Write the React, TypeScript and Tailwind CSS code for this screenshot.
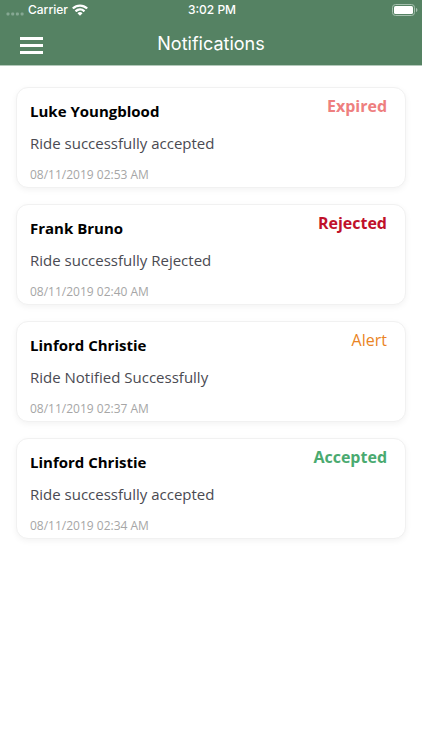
type Notification = {
  id: number;
  name: string;
  message: string;
  date: string;
  status: string;
  statusClass: string;
};

const notifications: Notification[] = [
  {
    id: 1,
    name: "Luke Youngblood",
    message: "Ride successfully accepted",
    date: "08/11/2019 02:53 AM",
    status: "Expired",
    statusClass: "font-bold text-[#ee7f7f]",
  },
  {
    id: 2,
    name: "Frank Bruno",
    message: "Ride successfully Rejected",
    date: "08/11/2019 02:40 AM",
    status: "Rejected",
    statusClass: "font-bold text-[#c0102a]",
  },
  {
    id: 3,
    name: "Linford Christie",
    message: "Ride Notified Successfully",
    date: "08/11/2019 02:37 AM",
    status: "Alert",
    statusClass: "font-normal text-[#ea8424]",
  },
  {
    id: 4,
    name: "Linford Christie",
    message: "Ride successfully accepted",
    date: "08/11/2019 02:34 AM",
    status: "Accepted",
    statusClass: "font-bold text-[#4aaa70]",
  },
];

function StatusBar() {
  return (
    <div className="grid h-5 grid-cols-3 items-center pl-[6px] pr-1 leading-5">
      <div className="flex items-center gap-1 text-xs">
        <svg width="18" height="4" viewBox="0 0 18 4" className="mt-2" aria-hidden="true">
          <g fill="#86a893">
            <rect x="0.5" y="0.5" width="3" height="3" rx="1" />
            <rect x="5.2" y="0.5" width="3" height="3" rx="1" />
            <rect x="9.9" y="0.5" width="3" height="3" rx="1" />
            <rect x="14.6" y="0.5" width="3" height="3" rx="1" />
          </g>
        </svg>
        <span className="font-medium">Carrier</span>
        <svg width="16" height="12" viewBox="0 0 16 12" fill="#fff" aria-label="Wi-Fi">
          <path d="M8 .4C5 .4 2.300 1.500.3 3.400a.4.4 0 0 0 0 .6l1.100 1.100c.2.2.4.2.6 0A8.800 8.800 0 0 1 8 2.700c2.300 0 4.400.9 6 2.400.2.200.4.200.6 0l1.100-1.100a.4.4 0 0 0 0-.6C13.700 1.500 11 .4 8 .4z" />
          <path d="M8 4.200c-1.900 0-3.700.7-5 2a.4.4 0 0 0 0 .6l1.100 1.100c.2.200.4.200.6 0A4.900 4.900 0 0 1 8 6.500c1.300 0 2.400.5 3.300 1.400.2.200.4.200.6 0L13 6.800a.4.4 0 0 0 0-.6 7.200 7.200 0 0 0-5-2z" />
          <path d="M8 8c-.9 0-1.700.3-2.300.9a.4.4 0 0 0 0 .6l2 2c.2.200.4.200.6 0l2-2a.4.4 0 0 0 0-.6C9.700 8.300 8.900 8 8 8z" />
        </svg>
      </div>
      <time className="text-center text-xs font-medium">3:02 PM</time>
      <svg
        width="26"
        height="12"
        viewBox="0 0 26 12"
        className="justify-self-end"
        aria-label="Battery full"
      >
        <rect x="0.5" y="0.5" width="22" height="11" rx="3" fill="none" stroke="#a5bfae" />
        <rect x="2" y="2" width="19" height="8" rx="1.6" fill="#fff" />
        <path d="M24 4v4c.9-.3 1.400-1.100 1.400-2s-.5-1.700-1.400-2z" fill="#a5bfae" />
      </svg>
    </div>
  );
}

function NotificationCard({ item }: { item: Notification }) {
  return (
    <li className="flex items-start justify-between rounded-xl border border-[#f1f1f1] bg-white pb-[2px] pl-[13px] pr-[18px] pt-2 shadow-[0_2px_6px_rgba(0,0,0,0.05)]">
      <div className="pt-[3px]">
        <h2 className="text-[15px] font-bold leading-6 text-black">{item.name}</h2>
        <p className="mt-2 text-[15px] leading-6 text-[#4a4a52]">{item.message}</p>
        <time className="mt-[10px] block text-xs leading-5 text-[#a6a6a6]">{item.date}</time>
      </div>
      <span className={`text-base leading-5 ${item.statusClass}`}>{item.status}</span>
    </li>
  );
}

export default function App() {
  return (
    <div className="min-h-screen bg-white font-['Open_Sans',sans-serif]">
      <header className="border-b border-[#b4c9bb] bg-[#558263] font-['Inter',sans-serif] text-white">
        <StatusBar />
        <div className="grid h-[45px] grid-cols-[1fr_auto_1fr] items-center px-5">
          <button type="button" aria-label="Open menu" className="mt-[6px] justify-self-start">
            <svg width="24" height="18" viewBox="0 0 24 18" fill="#fff" aria-hidden="true">
              <rect y="0" width="23" height="3" />
              <rect y="7" width="23" height="3" />
              <rect y="14" width="23" height="3" />
            </svg>
          </button>
          <h1 className="mt-[2px] text-lg leading-6">Notifications</h1>
        </div>
      </header>
      <main>
        <ul className="flex flex-col gap-4 px-4 pt-[21px]">
          {notifications.map((item) => (
            <NotificationCard key={item.id} item={item} />
          ))}
        </ul>
      </main>
    </div>
  );
}
